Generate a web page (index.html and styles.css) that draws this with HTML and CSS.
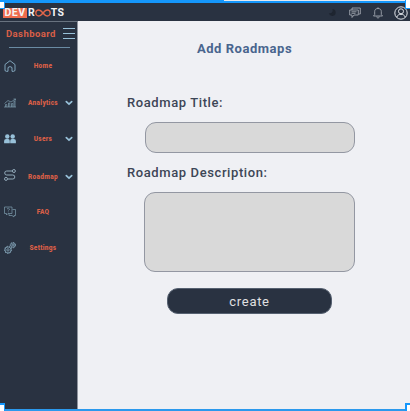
FILE: index.html
```html
<!DOCTYPE html>
<html lang="en">
<head>
<meta charset="utf-8">
<title>Add Roadmaps</title>
<link rel="stylesheet" href="styles.css">
</head>
<body>
<div class="app">
  <header class="topbar">
    <div class="logo"><span class="logo-dev">DEV</span><span class="logo-r">R</span><svg class="logo-loop" viewBox="0 0 16 8"><path d="M8 4C6 1.500 5 1 3.800 1a3 3 0 0 0 0 6C5 7 6 6.500 8 4s3-3 4.200-3a3 3 0 0 1 0 6C11 7 10 6.500 8 4z"/></svg><span class="logo-ts">TS</span></div>
    <div class="tools">
      <svg class="moon" viewBox="0 0 10 10"><path d="M5 1.200a3.800 3.800 0 1 1-4 4.600C4 6.500 6 4.500 5 1.200z"/></svg>
      <svg class="chat" viewBox="0 0 12 12"><path d="M3 3V1h8.300v6H10M.7 3h8.600v5H5L3 10.500V8H.7zM2.500 4.800h5M2.500 6.300h4"/></svg>
      <svg class="bell" viewBox="0 0 12 12"><path d="M1.500 9h9L9.300 7.500V4.500C9.300 2.500 8 1.500 6 1.500S2.700 2.500 2.700 4.500v3zM6 .3v1.200M4.800 9.500c0 2 2.400 2 2.400 0"/></svg>
      <svg class="user" viewBox="0 0 14 14"><circle cx="7" cy="7" r="6.200"/><circle cx="7" cy="5.300" r="2.500"/><path d="M2.700 11.300C3.500 7.300 10.500 7.300 11.300 11.300"/></svg>
    </div>
  </header>
  <div class="body">
    <aside class="sidebar">
      <div class="side-head"><span>Dashboard</span><svg viewBox="0 0 12 12"><path d="M0 .5h12M0 5.500h12M0 10.500h12"/></svg></div>
      <div class="rule"></div>
      <nav>
        <a class="item"><svg class="icon home" viewBox="0 0 12 12"><path d="M1 4.500 6 .7l5 3.800V10q0 1.300-1.300 1.300H8V8q0-1.300-2-1.300T4 8v3.300H2.300Q1 11.300 1 10z"/></svg><span>Home</span></a>
        <a class="item"><svg class="icon dim" viewBox="0 0 12 12"><path d="M0 10h12M1.500 10V7.500h1.300V10M4.500 10V6h1.300v4M7.500 10V6.500h1.300V10M10 10V4h1v6M.5 6.500l3.500-3 3 1.500 4.500-3M9.500 2h2v1.500"/></svg><span>Analytics</span><svg class="chev" viewBox="0 0 8 6"><path d="m1.300 1.700 2.700 2.500 2.700-2.500"/></svg></a>
        <a class="item"><svg class="icon users" viewBox="0 0 12 12"><circle cx="3.300" cy="3.500" r="2.200"/><circle cx="8.700" cy="3.500" r="2.200"/><path d="M.1 10.300V8q0-2 2-2h2.100q1.600 0 1.600 2v2.300zM6.200 10.300V8q0-2 1.600-2h2.100q2 0 2 2v2.300z"/></svg><span>Users</span><svg class="chev" viewBox="0 0 8 6"><path d="m1.300 1.700 2.700 2.500 2.700-2.500"/></svg></a>
        <a class="item roadmap"><svg class="icon road" viewBox="0 0 12 12"><circle cx="9.900" cy="2" r="1.500"/><circle cx="2" cy="9.900" r="1.500"/><path d="M8.200 2H2.700a1.900 1.900 0 0 0 0 4H8.800a1.900 1.900 0 0 1 0 4H3.700"/></svg><span>Roadmap</span><svg class="chev" viewBox="0 0 8 6"><path d="m1.300 1.700 2.700 2.500 2.700-2.500"/></svg></a>
        <a class="item"><svg class="icon dim" viewBox="0 0 12 12"><path d="M.5 1h7.500v6.500H4L2.500 9V7.500h-2zM8.500 3.500h3v6H10V11L8 9.500H5V8M3 3q1.500-1.500 2.500 0 0 1-1.200 1.500M4.300 5.500v.8"/></svg><span>FAQ</span></a>
        <a class="item"><svg class="icon gears" viewBox="0 0 12 12"><circle cx="4" cy="7.900" r="3"/><circle class="teeth" cx="4" cy="7.900" r="3.600"/><circle cx="4" cy="7.900" r="1.200"/><circle cx="8.900" cy="3.100" r="2.100"/><circle class="teeth" cx="8.900" cy="3.100" r="2.700"/><circle cx="8.900" cy="3.100" r=".8"/></svg><span>Settings</span></a>
      </nav>
    </aside>
    <main>
      <h1>Add Roadmaps</h1>
      <label class="title-label" for="title">Roadmap Title:</label>
      <input id="title" type="text">
      <label class="desc-label" for="desc">Roadmap Description:</label>
      <textarea id="desc"></textarea>
      <button type="button">create</button>
    </main>
  </div>
  <i class="edge top"></i><i class="edge bottom"></i>
  <i class="handle tl"></i><i class="handle tr"></i><i class="handle bl"></i><i class="handle br"></i>
</div>
</body>
</html>
```
FILE: styles.css
```css
* { box-sizing: border-box; }
body { margin: 0; font-family: Roboto, sans-serif; background: #eff0f4; }
.app { position: relative; width: 410px; height: 411px; overflow: hidden; display: flex; flex-direction: column; }
svg { display: block; fill: none; }
.topbar { height: 21px; flex: none; padding: 4px 3px 0 3px; background: #293241; display: flex; justify-content: space-between; align-items: center; }
.logo { display: flex; align-items: center; color: #f4f4f6; font: 700 10.5px/10px Roboto, sans-serif; }
.logo-dev { background: #ee6c4d; width: 24px; text-align: center; letter-spacing: .5px; }
.logo-r { margin-left: 1px; }
.logo-loop { width: 16px; height: 8px; stroke: #e2664a; stroke-width: 1.4; }
.logo-ts { letter-spacing: .4px; }
.tools { display: flex; align-items: center; stroke: #aeb4bd; stroke-width: .8; }
.moon { width: 9px; height: 9px; margin-right: 12px; }
.moon path { fill: #1e2530; stroke: none; }
.chat { width: 12px; height: 12px; margin-right: 11px; }
.bell { width: 12px; height: 12px; margin-right: 10px; }
.user { width: 14px; height: 14px; margin-right: -1px; stroke: #e0e4e9; stroke-width: 1; }
.body { flex: 1; display: flex; }
.sidebar { width: 78px; background: #293241; border-top: 1px solid #68727f; border-right: 1px solid #8f949e; }
.side-head { display: flex; align-items: center; justify-content: space-between; height: 22px; padding: 1px 2px 0 6px; color: #d95f47; font: 700 9.5px/22px Roboto, sans-serif; letter-spacing: .42px; }
.side-head svg { width: 12px; height: 12px; stroke: #98c1d9; stroke-width: 1; }
.rule { width: 61px; height: 1px; margin: 3px 0 0 9px; background: #6a8ba3; }
.item { display: grid; grid-template-columns: 12px 54px 8px; align-items: center; height: 36.4px; padding-left: 4px; color: #d95f47; font: 900 6.5px/10px Roboto, sans-serif; letter-spacing: .3px; }
.item span { text-align: center; }
.roadmap { padding-top: 3px; }
.icon { width: 12px; height: 12px; stroke: #98c1d9; stroke-width: .8; }
.dim { stroke: #7e9daf; stroke-width: .7; }
.road { stroke: #91a9b8; stroke-width: 1; margin-top: -4px; }
.users { fill: #98c1d9; stroke: none; }
.gears { stroke: #91b4c8; stroke-width: .7; }
.gears .teeth { stroke-width: .8; stroke-dasharray: 1.4 1.1; }
.chev { width: 8px; height: 6px; margin-left: -5px; stroke: #98c1d9; stroke-width: 1.7; stroke-linecap: round; }
main { flex: 1; display: flex; flex-direction: column; align-items: flex-start; color: #3d4656; }
h1 { margin: 20px 0 0 119px; color: #49658e; font: 700 13px/16px Roboto, sans-serif; letter-spacing: .53px; }
label { margin-left: 49px; font: 500 13px/16px Roboto, sans-serif; letter-spacing: .6px; white-space: nowrap; }
.title-label { margin-top: 38px; }
.desc-label { margin-top: 12px; }
input, textarea { display: block; border: 1px solid #9397a2; background: #d9d9d9; outline: none; resize: none; padding: 4px 10px; }
input { width: 210px; height: 31px; margin: 11px 0 0 67px; border-radius: 11px; }
textarea { width: 211px; height: 80px; margin: 11px 0 0 66px; border-radius: 11px; }
button { width: 165px; height: 26px; margin: 16px 0 0 89px; padding: 1px 0 0; border: 1px solid #566171; border-radius: 11px; background: #293241; color: #e0e0e2; font: 400 13px/23px Roboto, sans-serif; letter-spacing: .7px; }
.edge { position: absolute; left: 0; width: 410px; }
.top { top: 0; height: 3px; background: linear-gradient(90deg, #1597fb 224px, #e5eaf0 224px) 0 0 / 100% 1px no-repeat, #1597fb; }
.bottom { bottom: 0; height: 2px; background: #2b99ed; }
.handle { position: absolute; background: #fff; border: 0 solid #1597fb; }
.tl { left: 0; top: 0; width: 5px; height: 9px; border-width: 2px 1px 1px 0; }
.tr { right: 0; top: 0; width: 5px; height: 9px; border-width: 0 0 1px 1px; }
.bl { left: 0; bottom: 0; width: 5px; height: 8px; border-width: 2px 1px 0 0; }
.br { right: 0; bottom: 0; width: 5px; height: 8px; border-width: 2px 0 0 2px; }
```
